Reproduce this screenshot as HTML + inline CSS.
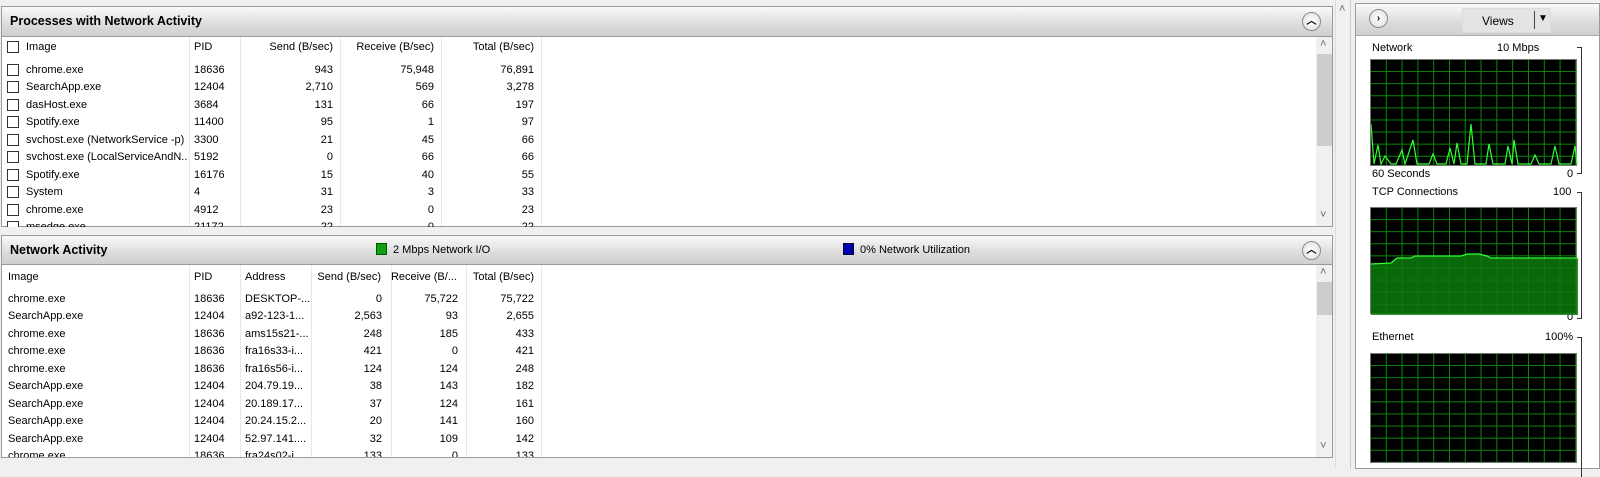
<!DOCTYPE html><html><head><style>
*{margin:0;padding:0;box-sizing:border-box}
body{width:1600px;height:469px;background:#f0f0f0;font-family:"Liberation Sans",sans-serif;font-size:11px;color:#000;position:relative;overflow:hidden}
.a{position:absolute;white-space:nowrap}
.hdr{position:absolute;background:linear-gradient(#fafafa,#dcdcdc 60%,#cfcfcf);border:1px solid #9a9a9a}
.hdr b{position:absolute;left:8px;font-size:12.5px;top:7px}
.btn{position:absolute;width:19px;height:19px;border-radius:50%;border:1px solid #8a8a8a;background:radial-gradient(#fff,#ddd);font-size:10px;text-align:center;line-height:17px;font-weight:bold}
.body{position:absolute;background:#fff;border:1px solid #9a9a9a;border-top:none}
.sep{position:absolute;width:1px;background:#e8e8e8}
.r{text-align:right}
td{white-space:nowrap;overflow:hidden;padding:0}
table{table-layout:fixed;border-collapse:collapse;font-size:11px}
.cb{position:absolute;width:12px;height:12px;border:1px solid #333;background:#fff}
td .cb{position:relative;display:block}
.sb{position:absolute;background:#f0f0f0}
.th{position:absolute;background:#cdcdcd}
.g{position:absolute;background:#000;border:1px solid #777;background-image:linear-gradient(90deg,#0a8a0a 1px,transparent 1px),linear-gradient(#0a8a0a 1px,transparent 1px);background-size:15.8px 12.1px;background-position:-1px -1px}
</style></head><body>
<div class="hdr" style="left:1px;top:6px;width:1332px;height:31px"><b>Processes with Network Activity</b><div class="btn" style="left:1300px;top:5px">︿</div></div>
<div class="body" style="left:1px;top:37px;width:1332px;height:190px;overflow:hidden">
<div class="sep" style="left:187px;top:0;height:190px"></div><div class="sep" style="left:238px;top:0;height:190px"></div><div class="sep" style="left:338px;top:0;height:190px"></div><div class="sep" style="left:439px;top:0;height:190px"></div><div class="sep" style="left:539px;top:0;height:190px"></div>
<div class="sb" style="left:1314px;top:0;width:17px;height:189px"></div><div class="th" style="left:1315px;top:17px;width:15px;height:92px"></div>
<div class="a" style="left:1318px;top:1px;color:#666">˄</div><div class="a" style="left:1318px;top:172px;color:#666">˅</div>
</div>
<div class="hdr" style="left:1px;top:235px;width:1332px;height:30px"><b>Network Activity</b>
<div class="a" style="left:374px;top:7px;width:11px;height:12px;background:#11a011;border:1px solid #050"></div><div class="a" style="left:391px;top:8px">2 Mbps Network I/O</div>
<div class="a" style="left:841px;top:7px;width:11px;height:12px;background:#0000b0;border:1px solid #003"></div><div class="a" style="left:858px;top:8px">0% Network Utilization</div>
<div class="btn" style="left:1300px;top:5px">︿</div></div>
<div class="body" style="left:1px;top:265px;width:1332px;height:193px;overflow:hidden">
<div class="sep" style="left:187px;top:0;height:193px"></div><div class="sep" style="left:238px;top:0;height:193px"></div><div class="sep" style="left:309px;top:0;height:193px"></div><div class="sep" style="left:389px;top:0;height:193px"></div><div class="sep" style="left:464px;top:0;height:193px"></div><div class="sep" style="left:539px;top:0;height:193px"></div>
<div class="sb" style="left:1314px;top:0;width:17px;height:192px"></div><div class="th" style="left:1315px;top:17px;width:15px;height:33px"></div>
<div class="a" style="left:1318px;top:1px;color:#666">˄</div><div class="a" style="left:1318px;top:175px;color:#666">˅</div>
</div>
<div class="a" style="left:1335px;top:0;width:16px;height:469px;background:#f0f0f0;border-left:1px solid #ddd;border-right:1px solid #ccc"></div>
<div class="a" style="left:1339px;top:3px;color:#666">˄</div>
<div class="a" style="left:1355px;top:3px;width:245px;height:466px;background:#fff;border:1px solid #9a9a9a"></div>
<div class="hdr" style="left:1355px;top:3px;width:245px;height:33px;border-bottom:1px solid #aaa"></div>
<div class="btn" style="left:1369px;top:9px">›</div>
<div class="a" style="left:1462px;top:8px;width:89px;height:25px;background:#e4e4e4;border:1px solid #ddd"></div>
<div class="a" style="left:1482px;top:14px;font-size:12px">Views</div>
<div class="a" style="left:1534px;top:11px;width:1px;height:18px;background:#444"></div>
<div class="a" style="left:1538px;top:13px;font-size:10px">▼</div>
<div class="a" style="left:1372px;top:42px">Network</div><div class="a" style="left:1497px;top:42px">10 Mbps</div>
<div class="a" style="left:1372px;top:168px">60 Seconds</div><div class="a" style="left:1567px;top:168px">0</div>
<div class="a" style="left:1372px;top:186px">TCP Connections</div><div class="a" style="left:1553px;top:186px">100</div>
<div class="a" style="left:1567px;top:311px">0</div>
<div class="a" style="left:1372px;top:331px">Ethernet</div><div class="a" style="left:1545px;top:331px">100%</div>
<div class="a" style="left:1577px;top:47px;width:5px;height:127px;border:1px solid #333;border-left:none"></div>
<div class="a" style="left:1577px;top:192px;width:5px;height:127px;border:1px solid #333;border-left:none"></div>
<div class="a" style="left:1577px;top:337px;width:5px;height:140px;border:1px solid #333;border-left:none;border-bottom:none"></div>
<div class="g" style="left:1370px;top:59px;width:207px;height:107px"><svg width="207" height="107" style="position:absolute;left:0;top:0"><polyline fill="none" stroke="#3f3" stroke-width="1.2" points="0,64 3,104 7,85 10,104 14,96 20,104 25,104 31,90 34,104 42,80 46,104 58,104 62,94 66,104 75,104 79,88 83,104 86,83 90,104 96,104 100,64 104,104 115,104 118,84 122,104 134,104 137,86 141,104 143,80 147,104 160,104 164,95 168,104 180,104 184,86 188,104 200,104 204,86 206,104"/></svg></div>
<div class="g" style="left:1370px;top:207px;width:207px;height:107px"><svg width="207" height="107" style="position:absolute;left:0;top:0"><polygon fill="#0b7a0b" fill-opacity=".85" points="0,56 20,55 26,50 40,50 44,48 90,48 96,46 108,46 116,48 120,50 207,50 207,107 0,107"/><polyline fill="none" stroke="#3f3" stroke-width="1.2" points="0,56 20,55 26,50 40,50 44,48 90,48 96,46 108,46 116,48 120,50 207,50"/></svg></div>
<div class="g" style="left:1370px;top:353px;width:207px;height:110px"></div>

<div class="cb" style="left:7px;top:41px"></div><div class="a" style="left:26px;top:41px">Image</div><div class="a" style="left:194px;top:41px">PID</div>
<div class="a r" style="left:233px;width:100px;top:41px">Send (B/sec)</div><div class="a r" style="left:334px;width:100px;top:41px">Receive (B/sec)</div><div class="a r" style="left:434px;width:100px;top:41px">Total (B/sec)</div>
<div style="position:absolute;left:0;top:61px;width:1314px;height:166px;overflow:hidden">
<table style="position:absolute;left:0;top:0;width:534px">
<colgroup><col style="width:7px"><col style="width:19px"><col style="width:162px"><col style="width:45px"><col style="width:100px"><col style="width:101px"><col style="width:100px"></colgroup>
<tbody>
<tr style="height:17.5px"><td></td><td><div class="cb"></div></td><td>chrome.exe</td><td style="padding-left:6px">18636</td><td class="r">943</td><td class="r">75,948</td><td class="r">76,891</td></tr>
<tr style="height:17.5px"><td></td><td><div class="cb"></div></td><td>SearchApp.exe</td><td style="padding-left:6px">12404</td><td class="r">2,710</td><td class="r">569</td><td class="r">3,278</td></tr>
<tr style="height:17.5px"><td></td><td><div class="cb"></div></td><td>dasHost.exe</td><td style="padding-left:6px">3684</td><td class="r">131</td><td class="r">66</td><td class="r">197</td></tr>
<tr style="height:17.5px"><td></td><td><div class="cb"></div></td><td>Spotify.exe</td><td style="padding-left:6px">11400</td><td class="r">95</td><td class="r">1</td><td class="r">97</td></tr>
<tr style="height:17.5px"><td></td><td><div class="cb"></div></td><td>svchost.exe (NetworkService -p)</td><td style="padding-left:6px">3300</td><td class="r">21</td><td class="r">45</td><td class="r">66</td></tr>
<tr style="height:17.5px"><td></td><td><div class="cb"></div></td><td>svchost.exe (LocalServiceAndN...</td><td style="padding-left:6px">5192</td><td class="r">0</td><td class="r">66</td><td class="r">66</td></tr>
<tr style="height:17.5px"><td></td><td><div class="cb"></div></td><td>Spotify.exe</td><td style="padding-left:6px">16176</td><td class="r">15</td><td class="r">40</td><td class="r">55</td></tr>
<tr style="height:17.5px"><td></td><td><div class="cb"></div></td><td>System</td><td style="padding-left:6px">4</td><td class="r">31</td><td class="r">3</td><td class="r">33</td></tr>
<tr style="height:17.5px"><td></td><td><div class="cb"></div></td><td>chrome.exe</td><td style="padding-left:6px">4912</td><td class="r">23</td><td class="r">0</td><td class="r">23</td></tr>
<tr style="height:17.5px"><td></td><td><div class="cb"></div></td><td>msedge.exe</td><td style="padding-left:6px">21172</td><td class="r">22</td><td class="r">0</td><td class="r">22</td></tr>
</tbody></table></div>
<div class="a" style="left:8px;top:271px">Image</div><div class="a" style="left:194px;top:271px">PID</div><div class="a" style="left:245px;top:271px">Address</div>
<div class="a r" style="left:300px;width:81px;top:271px">Send (B/sec)</div><div class="a r" style="left:380px;width:77px;top:271px">Receive (B/...</div><div class="a r" style="left:460px;width:74px;top:271px">Total (B/sec)</div>
<div style="position:absolute;left:0;top:290px;width:1314px;height:167px;overflow:hidden">
<table style="position:absolute;left:0;top:0;width:534px">
<colgroup><col style="width:8px"><col style="width:186px"><col style="width:51px"><col style="width:71px"><col style="width:66px"><col style="width:76px"><col style="width:76px"></colgroup>
<tbody>
<tr style="height:17.5px"><td></td><td>chrome.exe</td><td>18636</td><td>DESKTOP-...</td><td class="r">0</td><td class="r">75,722</td><td class="r">75,722</td></tr>
<tr style="height:17.5px"><td></td><td>SearchApp.exe</td><td>12404</td><td>a92-123-1...</td><td class="r">2,563</td><td class="r">93</td><td class="r">2,655</td></tr>
<tr style="height:17.5px"><td></td><td>chrome.exe</td><td>18636</td><td>ams15s21-...</td><td class="r">248</td><td class="r">185</td><td class="r">433</td></tr>
<tr style="height:17.5px"><td></td><td>chrome.exe</td><td>18636</td><td>fra16s33-i...</td><td class="r">421</td><td class="r">0</td><td class="r">421</td></tr>
<tr style="height:17.5px"><td></td><td>chrome.exe</td><td>18636</td><td>fra16s56-i...</td><td class="r">124</td><td class="r">124</td><td class="r">248</td></tr>
<tr style="height:17.5px"><td></td><td>SearchApp.exe</td><td>12404</td><td>204.79.19...</td><td class="r">38</td><td class="r">143</td><td class="r">182</td></tr>
<tr style="height:17.5px"><td></td><td>SearchApp.exe</td><td>12404</td><td>20.189.17...</td><td class="r">37</td><td class="r">124</td><td class="r">161</td></tr>
<tr style="height:17.5px"><td></td><td>SearchApp.exe</td><td>12404</td><td>20.24.15.2...</td><td class="r">20</td><td class="r">141</td><td class="r">160</td></tr>
<tr style="height:17.5px"><td></td><td>SearchApp.exe</td><td>12404</td><td>52.97.141....</td><td class="r">32</td><td class="r">109</td><td class="r">142</td></tr>
<tr style="height:17.5px"><td></td><td>chrome.exe</td><td>18636</td><td>fra24s02-i...</td><td class="r">133</td><td class="r">0</td><td class="r">133</td></tr>
</tbody></table></div>
</body></html>
